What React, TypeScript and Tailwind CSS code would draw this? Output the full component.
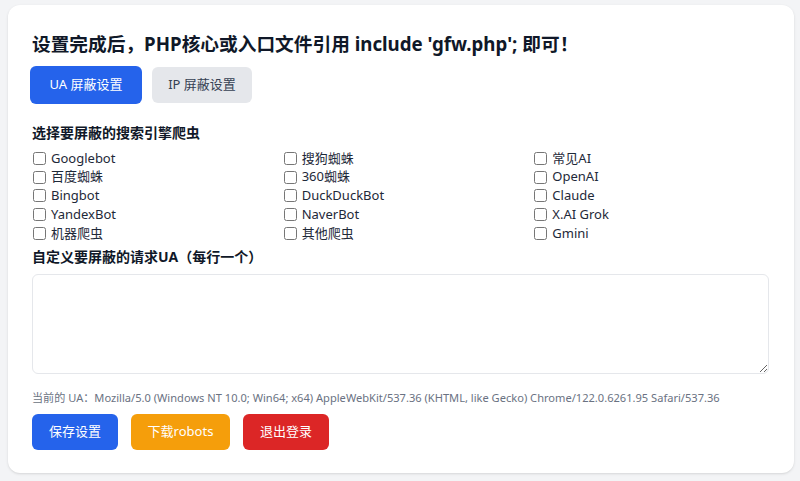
import { useState } from 'react';

const BOTS = [
  'Googlebot', '搜狗蜘蛛', '常见AI',
  '百度蜘蛛', '360蜘蛛', 'OpenAI',
  'Bingbot', 'DuckDuckBot', 'Claude',
  'YandexBot', 'NaverBot', 'X.AI Grok',
  '机器爬虫', '其他爬虫', 'Gmini',
];

const UA =
  'Mozilla/5.0 (Windows NT 10.0; Win64; x64) AppleWebKit/537.36 (KHTML, like Gecko) Chrome/122.0.6261.95 Safari/537.36';

export default function App() {
  const [tab, setTab] = useState<'ua' | 'ip'>('ua');
  const [checked, setChecked] = useState<Record<string, boolean>>({});

  return (
    <div className="min-h-screen bg-[#f3f4f6] px-2 pt-[5px] font-['Noto_Sans','Noto_Sans_CJK_SC',sans-serif]">
      <div className="w-[786px] rounded-xl bg-white px-6 pt-[25px] pb-[23px] shadow-sm">
        {/* Title */}
        <h1 className="h-7 text-[18.7px] leading-7 font-bold whitespace-nowrap text-gray-900">
          设置完成后，PHP核心或入口文件引用 include 'gfw.php'; 即可！
        </h1>

        {/* Tabs */}
        <div className="mt-2 flex items-center gap-[10px]">
          <button
            onClick={() => setTab('ua')}
            className={`flex h-[38px] w-[112px] -ml-[2px] items-center justify-center rounded-md text-[13px] ${
              tab === 'ua' ? 'bg-[#2563eb] text-white' : 'bg-[#e5e7eb] text-gray-700'
            }`}
          >
            UA 屏蔽设置
          </button>
          <button
            onClick={() => setTab('ip')}
            className={`flex h-[36px] w-[100px] items-center justify-center rounded-md text-[13px] ${
              tab === 'ip' ? 'bg-[#2563eb] text-white' : 'bg-[#e5e7eb] text-gray-700'
            }`}
          >
            IP 屏蔽设置
          </button>
        </div>

        {/* Bot list */}
        <div className="mt-[19px] h-5 text-[14px] leading-5 font-bold text-gray-900">选择要屏蔽的搜索引擎爬虫</div>
        <div className="mt-[6px] grid grid-cols-3 auto-rows-[18.75px] gap-x-[14px]">
          {BOTS.map(b => (
            <label key={b} className="flex items-center gap-[5px] text-[13px] text-gray-800">
              <input
                type="checkbox"
                className="ml-px h-[13px] w-[13px]"
                checked={!!checked[b]}
                onChange={e => setChecked({ ...checked, [b]: e.target.checked })}
              />
              {b}
            </label>
          ))}
        </div>

        {/* Custom UA */}
        <div className="mt-[4px] h-5 text-[14px] leading-5 font-bold text-gray-900">自定义要屏蔽的请求UA（每行一个）</div>
        <textarea className="mt-[7px] block h-[100px] w-[737px] rounded-md border border-[#e5e7eb] p-2 text-[13px] outline-none" />

        <div className="mt-4 h-4 text-[11.1px] leading-4 whitespace-nowrap text-gray-500">
          当前的 UA：{UA}
        </div>

        {/* Actions */}
        <div className="mt-2 flex gap-[13px]">
          <button className="flex h-9 w-[86px] items-center justify-center rounded-md bg-[#2563eb] text-[13px] text-white">
            保存设置
          </button>
          <button className="flex h-9 w-[99px] items-center justify-center rounded-md bg-[#f59e0b] text-[13px] text-white">
            下载robots
          </button>
          <button className="flex h-9 w-[86px] items-center justify-center rounded-md bg-[#dc2626] text-[13px] text-white">
            退出登录
          </button>
        </div>
      </div>
    </div>
  );
}
